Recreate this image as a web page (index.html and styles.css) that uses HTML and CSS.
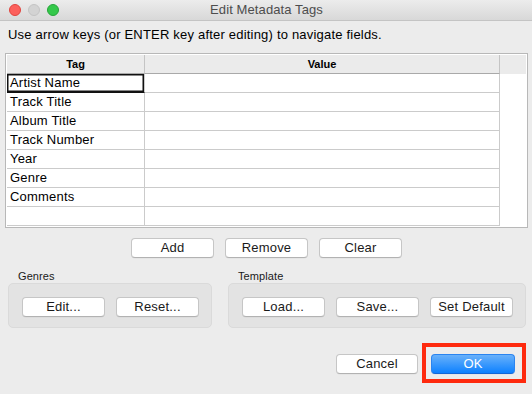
FILE: index.html
```html
<!DOCTYPE html>
<html>
<head>
<meta charset="utf-8">
<link rel="stylesheet" href="styles.css">
</head>
<body>
<div class="window">
  <div class="titlebar">
    <div class="lights">
      <span class="light red"></span>
      <span class="light gray"></span>
      <span class="light green"></span>
    </div>
    <div class="title">Edit Metadata Tags</div>
  </div>

  <p class="hint">Use arrow keys (or ENTER key after editing) to navigate fields.</p>

  <div class="table">
    <div class="cols">
      <div class="hcell c1">Tag</div><div class="hcell c2">Value</div>
      <div class="cell c1 selected">Artist Name</div><div class="cell c2"></div>
      <div class="cell c1">Track Title</div><div class="cell c2"></div>
      <div class="cell c1">Album Title</div><div class="cell c2"></div>
      <div class="cell c1">Track Number</div><div class="cell c2"></div>
      <div class="cell c1">Year</div><div class="cell c2"></div>
      <div class="cell c1">Genre</div><div class="cell c2"></div>
      <div class="cell c1">Comments</div><div class="cell c2"></div>
      <div class="cell c1"></div><div class="cell c2"></div>
    </div>
    <div class="scroll">
      <div class="scroll-head"></div>
      <div class="scroll-body"></div>
    </div>
  </div>

  <div class="actions">
    <button class="btn">Add</button>
    <button class="btn">Remove</button>
    <button class="btn">Clear</button>
  </div>

  <div class="groups">
    <div class="group genres">
      <div class="group-label">Genres</div>
      <div class="group-box">
        <button class="btn">Edit...</button>
        <button class="btn">Reset...</button>
      </div>
    </div>
    <div class="group template">
      <div class="group-label">Template</div>
      <div class="group-box">
        <button class="btn">Load...</button>
        <button class="btn">Save...</button>
        <button class="btn">Set Default</button>
      </div>
    </div>
  </div>

  <div class="footer">
    <button class="btn">Cancel</button>
    <div class="highlight">
      <button class="btn primary">OK</button>
    </div>
  </div>
</div>
</body>
</html>
```

FILE: styles.css
```css
* {
  box-sizing: border-box;
}

html, body {
  margin: 0;
  padding: 0;
}

body {
  width: 532px;
  height: 394px;
  background: #ececec;
  font-family: "Liberation Sans", Arial, sans-serif;
  font-size: 13px;
  letter-spacing: 0.2px;
  color: #000;
  overflow: hidden;
}

.window {
  width: 532px;
  height: 394px;
}

/* Title bar */
.titlebar {
  height: 21px;
  border-bottom: 1px solid #c4c4c4;
  background: linear-gradient(#ececec, #d8d8d8);
  display: flex;
  align-items: center;
}

.lights {
  display: flex;
  gap: 7px;
  padding-left: 9px;
  margin-top: -1px;
}

.light {
  width: 12px;
  height: 12px;
  border-radius: 50%;
  display: block;
}

.light.red {
  background: #fc605c;
  border: 0.5px solid #e0443e;
}

.light.gray {
  background: #d3d3d3;
  border: 0.5px solid #c4c4c4;
}

.light.green {
  background: #34c84a;
  border: 0.5px solid #27a53a;
}

.title {
  flex: 1;
  text-align: center;
  color: #4d4d4d;
  font-size: 13px;
  letter-spacing: 0.1px;
  margin-left: -58px;
  margin-top: -1px;
}

/* Hint */
.hint {
  margin: 6px 0 0 8px;
  line-height: 16px;
  height: 16px;
}

/* Table */
.table {
  margin: 10px 0 0 5px;
  width: 523px;
  height: 175px;
  border: 1px solid #b8b8b8;
  padding: 1px;
  background: #fff;
  display: flex;
}

.cols {
  display: grid;
  grid-template-columns: 138px 355px;
  grid-auto-rows: 19px;
}

.hcell {
  background: #ebebeb;
  border-bottom: 1px solid #a9a9a9;
  border-right: 1px solid #c4c4c4;
  font-weight: bold;
  font-size: 11px;
  letter-spacing: 0;
  text-align: center;
  line-height: 18px;
}

.cell {
  border-bottom: 1px solid #cbcbcb;
  border-right: 1px solid #cbcbcb;
  padding-left: 3px;
  line-height: 18px;
  white-space: nowrap;
}

.cell.selected {
  box-shadow: inset 0 0 0 1.5px #111;
  border-bottom-color: #111;
}

.scroll {
  flex: 1;
  display: flex;
  flex-direction: column;
}

.scroll-head {
  height: 19px;
  background: #ebebeb;
}

.scroll-body {
  flex: 1;
  background: #fff;
}

/* Buttons */
.btn {
  height: 20px;
  padding: 0;
  font-family: "Liberation Sans", Arial, sans-serif;
  font-size: 13px;
  letter-spacing: 0.2px;
  line-height: 18px;
  color: #1a1a1a;
  background: #fff;
  border: 1px solid #c6c6c6;
  border-bottom-color: #b2b2b2;
  border-radius: 4px;
  box-shadow: 0 0.5px 0.5px rgba(0, 0, 0, 0.06);
  width: 83px;
}

.actions {
  display: flex;
  justify-content: center;
  gap: 11px;
  margin-top: 10px;
  padding-left: 1px;
}

/* Groups */
.groups {
  display: flex;
  gap: 16px;
  padding: 0 6px 0 8px;
  margin-top: 12px;
}

.group {
  display: flex;
  flex-direction: column;
}

.group.genres {
  flex: 0 0 204px;
}

.group.template {
  flex: 1;
}

.group-label {
  font-size: 11px;
  letter-spacing: 0.1px;
  line-height: 13px;
  height: 13px;
  padding-left: 10px;
  color: #1a1a1a;
}

.group-box {
  height: 45px;
  background: #e3e3e3;
  border: 1px solid #dadada;
  border-radius: 5px;
  display: flex;
  gap: 11px;
  padding: 13px 12px 10px 13px;
}

.group-box .btn {
  width: 83px;
}

/* Footer */
.footer {
  display: flex;
  justify-content: flex-end;
  align-items: flex-start;
  gap: 4px;
  padding-right: 6px;
  margin-top: 15px;
}

.footer > .btn {
  margin-top: 11px;
  width: 82px;
}

.highlight {
  border: 4px solid #fe2a0e;
  padding: 7px 7px 5px 5px;
}

.btn.primary {
  width: 84px;
  color: #fff;
  background: linear-gradient(#69b1fa, #0d81ff);
  border: 1px solid #2a84f0;
  border-bottom-color: #1467d6;
}
```
